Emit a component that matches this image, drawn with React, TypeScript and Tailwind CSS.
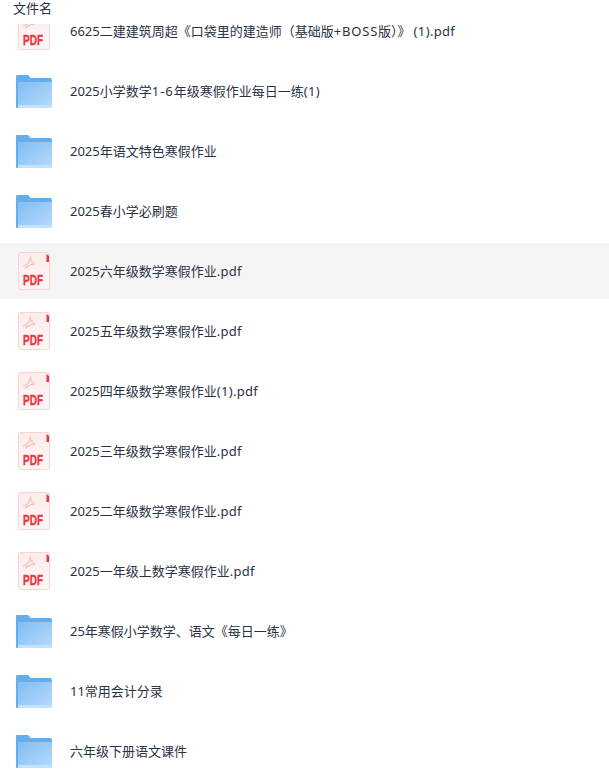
const rows: [string, string][] = [
  ["pdf", "6625二建建筑周超《口袋里的建造师（基础版+BOSS版）》(1).pdf"],
  ["folder", "2025小学数学1-6年级寒假作业每日一练(1)"],
  ["folder", "2025年语文特色寒假作业"],
  ["folder", "2025春小学必刷题"],
  ["pdf", "2025六年级数学寒假作业.pdf"],
  ["pdf", "2025五年级数学寒假作业.pdf"],
  ["pdf", "2025四年级数学寒假作业(1).pdf"],
  ["pdf", "2025三年级数学寒假作业.pdf"],
  ["pdf", "2025二年级数学寒假作业.pdf"],
  ["pdf", "2025一年级上数学寒假作业.pdf"],
  ["folder", "25年寒假小学数学、语文《每日一练》"],
  ["folder", "11常用会计分录"],
  ["folder", "六年级下册语文课件"],
];

function spacing(part: string) {
  if (part === ".pdf") return "tracking-[0.25px]";
  if (part === "(1)") return "tracking-[0.35px]";
  if (part === "1-6") return "tracking-[1px]";
  if (part === "+BOSS") return "tracking-[0.8px]";
  if (part === "》") return "pr-[3px]";
  return "";
}

function Name({ text }: { text: string }) {
  const parts = text.split(/(\.pdf|\(1\)|1-6|\+BOSS|》(?=\())/);
  return (
    <span className="whitespace-nowrap leading-[18px]">
      {parts.map((part, i) => (
        <span key={i} className={spacing(part)}>{part}</span>
      ))}
    </span>
  );
}

function PdfIcon() {
  return (
    <svg width="32" height="38" viewBox="0 0 32 38" className="shrink-0">
      <defs>
        <linearGradient id="pdfBg" x1="0" y1="0" x2="0" y2="1">
          <stop offset="0" stopColor="#fdecec" />
          <stop offset="1" stopColor="#fef7f7" />
        </linearGradient>
      </defs>
      <rect x="0.5" y="0.5" width="31" height="37" rx="2.5" fill="url(#pdfBg)" stroke="#fbd3d3" />
      <path d="M28.500 2 31 4v6h-2.500Z" fill="#e8373f" />
      <path d="M5 14c3-.5 6-3 7.500-8 .8 3 2.500 5.500 4.500 6.500-3-.3-5 .3-7 1.500-1 .6-2 1.500-3 2.500" fill="none" stroke="#f8c8c8" strokeWidth="1.500" />
      <text x="15" y="33" fontFamily="'Liberation Sans', sans-serif" fontWeight="700" fontSize="14" fill="#e8373f" stroke="#e8373f" strokeWidth="0.4" textAnchor="middle" textLength="20" lengthAdjust="spacingAndGlyphs">PDF</text>
    </svg>
  );
}

function FolderIcon() {
  return (
    <svg width="36" height="33" viewBox="0 0 36 33" className="mt-px shrink-0">
      <defs>
        <linearGradient id="folderFront" x1="0" y1="0" x2="1" y2="1">
          <stop offset="0" stopColor="#82bdf3" />
          <stop offset="1" stopColor="#b5dafd" />
        </linearGradient>
      </defs>
      <path d="M0 1a1 1 0 0 1 1-1h11l3 3h19a2 2 0 0 1 2 2v28H1a1 1 0 0 1-1-1Z" fill="#63aeec" />
      <rect x="2" y="7" width="34" height="26" fill="url(#folderFront)" />
      <rect x="2" y="30" width="34" height="3" fill="#c4e1fd" />
      <rect x="27" y="11" width="5" height="1" fill="#9ccbf5" />
      <rect x="27" y="13" width="5" height="1" fill="#9ccbf5" />
    </svg>
  );
}

export default function App() {
  return (
    <div className="h-[772px] w-[609px] overflow-hidden bg-white font-['Noto_Sans','Noto_Sans_CJK_SC',sans-serif] text-[13px] text-[#2a3245]">
      <div className="relative z-10 h-[24px] bg-white pl-[13px] leading-[16px]">文件名</div>
      <div className="-mt-[21px] flex flex-col gap-1">
        {rows.map(([type, name], i) => (
          <div key={name} className={`flex h-14 items-center ${i === 4 ? "bg-[#f5f5f5]" : ""}`}>
            <div className="flex w-[70px] shrink-0 justify-center pr-[2px]">
              {type === "pdf" ? <PdfIcon /> : <FolderIcon />}
            </div>
            <Name text={name} />
          </div>
        ))}
      </div>
    </div>
  );
}
